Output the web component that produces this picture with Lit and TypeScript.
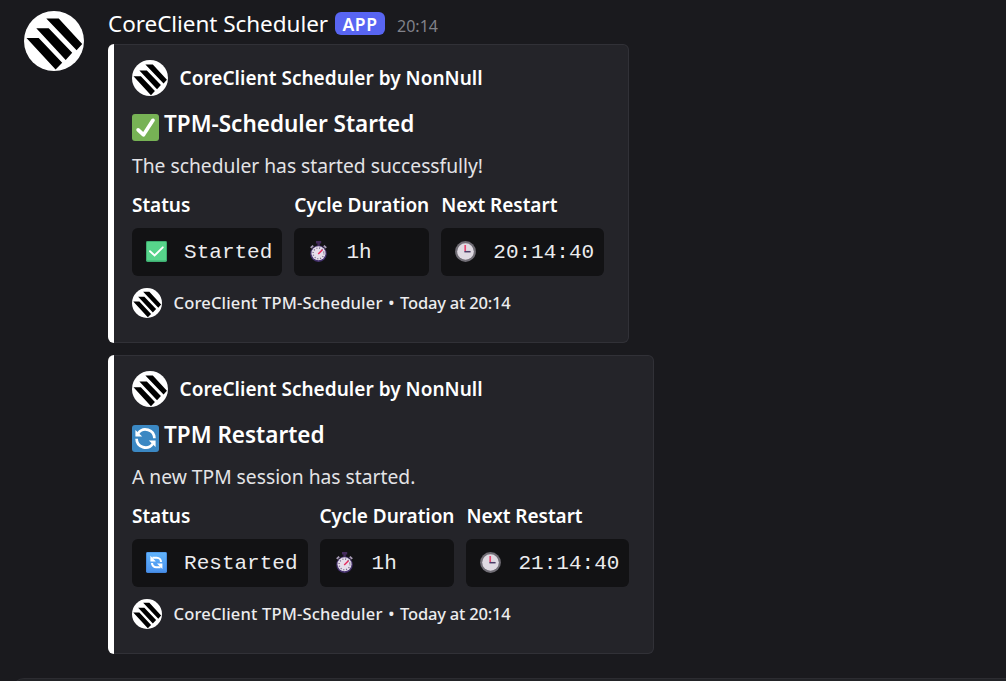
import { LitElement, html, css, svg } from "lit";
import { customElement, property } from "lit/decorators.js";

type IconName = "check" | "refresh" | "miniCheck" | "miniRefresh" | "stopwatch" | "clock";

interface Field {
  label: string;
  icon: IconName;
  value: string;
}

interface Embed {
  icon: IconName;
  title: string;
  description: string;
  fields: Field[];
}

const EMBEDS: Embed[] = [
  {
    icon: "check",
    title: "TPM-Scheduler Started",
    description: "The scheduler has started successfully!",
    fields: [
      { label: "Status", icon: "miniCheck", value: "Started" },
      { label: "Cycle Duration", icon: "stopwatch", value: "1h" },
      { label: "Next Restart", icon: "clock", value: "20:14:40" },
    ],
  },
  {
    icon: "refresh",
    title: "TPM Restarted",
    description: "A new TPM session has started.",
    fields: [
      { label: "Status", icon: "miniRefresh", value: "Restarted" },
      { label: "Cycle Duration", icon: "stopwatch", value: "1h" },
      { label: "Next Restart", icon: "clock", value: "21:14:40" },
    ],
  },
];

const ICONS = {
  check: svg`<svg viewBox="0 0 36 36">
    <rect width="36" height="36" rx="4" fill="#77b255"/>
    <path fill="#fff" d="M29.28 6.362c-1.156-.751-2.704-.422-3.458.736L14.936 23.877l-5.029-4.65c-1.014-.938-2.596-.875-3.533.138-.937 1.014-.875 2.596.139 3.533l7.209 6.666c.48.445 1.09.665 1.696.665.673 0 1.534-.282 2.099-1.139.332-.506 12.5-19.27 12.5-19.27.751-1.159.421-2.707-.737-3.458z"/>
  </svg>`,
  refresh: svg`<svg viewBox="0 0 27 27">
    <rect width="27" height="27" rx="3" fill="#3b88c3"/>
    <g fill="none" stroke="#fff" stroke-width="2.7">
      <path d="M6.2 8.3A8.9 8.9 0 0 1 22.4 13.3"/>
      <path d="M20.8 18.7A8.9 8.9 0 0 1 4.6 13.7"/>
    </g>
    <path fill="#fff" d="M3.4 5v6.5h6.8zM23.6 22v-6.5h-6.8z"/>
  </svg>`,
  miniCheck: svg`<svg viewBox="0 0 21 21">
    <rect width="21" height="21" rx="1.4" fill="#3faf72"/>
    <rect x="1" y="1" width="19" height="18.6" rx=".8" fill="#57d48b"/>
    <path d="M4 10.2l4.6 4.3 8.2-8.2" fill="none" stroke="#fff" stroke-width="1.9" stroke-linecap="round"/>
  </svg>`,
  miniRefresh: svg`<svg viewBox="0 0 21 21">
    <defs><linearGradient id="b" x1="0" y1="0" x2="0" y2="1">
      <stop offset="0" stop-color="#62b4fb"/><stop offset="1" stop-color="#4b93ee"/>
    </linearGradient></defs>
    <rect width="21" height="21" rx="1.4" fill="#4386dc"/>
    <rect x=".8" y=".6" width="19.4" height="19.2" rx=".9" fill="url(#b)"/>
    <g fill="none" stroke="#fff" stroke-width="2.1">
      <path d="M6.4 5.8h4.4a4.2 4.2 0 0 1 4.2 4.2"/>
      <path d="M14.6 15.2h-4.4A4.2 4.2 0 0 1 6 11"/>
    </g>
    <path fill="#fff" d="M4.4 3.8v5.6h5.4zM16.4 17v-5.6h-5.4z"/>
  </svg>`,
  stopwatch: svg`<svg viewBox="0 0 21 21">
    <path d="M8 0h5.2v2.6h-1.4V5H9.4V2.6H8z" fill="#432a5b"/>
    <path d="M2.8 6.9l2.4-2.3M18.2 6.9l-2.4-2.3" stroke="#a79bb5" stroke-width="2"/>
    <circle cx="10.5" cy="12.7" r="8.2" fill="#46336f"/>
    <circle cx="10.5" cy="12.3" r="7" fill="#e6deeb"/>
    <circle cx="10.5" cy="12.4" r="5.4" fill="none" stroke="#796b8b" stroke-width="1.4" stroke-dasharray="1 1.83"/>
    <path d="M10.2 13l4.3-4.3" stroke="#e52c5e" stroke-width="1.5"/>
  </svg>`,
  clock: svg`<svg viewBox="0 0 21 21">
    <circle cx="10.5" cy="10.5" r="10.4" fill="#716e76"/>
    <circle cx="10.5" cy="10.5" r="8.3" fill="#dfdae2"/>
    <path d="M10.2 4v6.5" stroke="#e84b73" stroke-width="1.7"/>
    <path d="M9.4 10.7h6.2" stroke="#4b3c67" stroke-width="1.5"/>
  </svg>`,
};

const LOGO = svg`<svg viewBox="0 0 60 60">
  <circle cx="30" cy="30" r="30" fill="#fff"/>
  <path fill="#000" d="M2.5 27h12.2L38.2 51.8l-6.6 6.8zM12.3 17.3h12.4L48.2 41.8l-6.5 7.1zM22.3 7.5h12.4L58.2 32.9l-5.6 6.4z"/>
</svg>`;

@customElement("scheduler-embed")
class SchedulerEmbed extends LitElement {
  @property({ attribute: false }) data!: Embed;

  static styles = css`
    :host {
      display: flex;
      height: 299px;
      width: max-content;
      color: #fff;
    }
    svg { display: block; width: 100%; height: 100%; }
    .accent { width: 6px; border-radius: 6px 0 0 6px; background: #fff; }
    .body {
      box-sizing: border-box;
      height: 299px;
      padding: 15px 24px 0 18px;
      background: #242429;
      border: 1px solid #313137;
      border-left: 0;
      border-radius: 0 6px 6px 0;
    }
    .author { display: flex; align-items: center; gap: 11.5px; height: 36px; font-size: 19px; font-weight: 600; letter-spacing: 0.03px; }
    .author-logo { width: 36px; height: 36px; }
    .title { display: flex; gap: 5px; height: 30px; margin-top: 12px; font-size: 22.5px; line-height: 32px; font-weight: 600; }
    .title-icon { width: 27px; height: 27px; margin-top: 6px; }
    .description { margin-top: 15px; font-size: 19.25px; line-height: 26px; color: #e3e3e6; }
    .fields { display: grid; grid-template-columns: repeat(3, max-content); gap: 12px; margin-top: 13px; }
    .label { font-size: 19px; line-height: 26px; font-weight: 600; letter-spacing: -0.04px; }
    .value {
      box-sizing: border-box;
      display: flex;
      align-items: center;
      height: 48px;
      margin-top: 10px;
      padding: 0 10px 0 14px;
      border-radius: 6px;
      background: #121214;
      color: #ececee;
      font: 21px/24px "Liberation Mono", monospace;
    }
    .value-icon { width: 21px; height: 21px; margin: 0 17.1px 1px 0; }
    .value-text { padding-top: 2px; }
    .footer { display: flex; align-items: center; height: 30px; margin-top: 12px; font-size: 16.5px; font-weight: 500; color: #ececee; }
    .footer span { line-height: 24px; margin-top: -1px; }
    .footer-logo { width: 30px; height: 30px; margin-right: 11.5px; }
    .footer-name { letter-spacing: 0.18px; }
    .dot { width: 17.5px; text-align: center; }
    .footer-time { letter-spacing: -0.2px; }
  `;

  render() {
    const { icon, title, description, fields } = this.data;
    return html`
      <div class="accent"></div>
      <div class="body">
        <div class="author"><div class="author-logo">${LOGO}</div>CoreClient Scheduler by NonNull</div>
        <div class="title"><div class="title-icon">${ICONS[icon]}</div>${title}</div>
        <div class="description">${description}</div>
        <div class="fields">
          ${fields.map(
            (f) => html`<div class="field">
              <div class="label">${f.label}</div>
              <div class="value">
                <div class="value-icon">${ICONS[f.icon]}</div>
                <span class="value-text">${f.value}</span>
              </div>
            </div>`
          )}
        </div>
        <div class="footer">
          <div class="footer-logo">${LOGO}</div>
          <span class="footer-name">CoreClient TPM-Scheduler</span>
          <span class="dot">•</span>
          <span class="footer-time">Today at 20:14</span>
        </div>
      </div>
    `;
  }
}

@customElement("app-root")
class AppRoot extends LitElement {
  static styles = css`
    :host {
      display: flex;
      flex-direction: column;
      box-sizing: border-box;
      height: 681px;
      overflow: hidden;
      background: #1a1a1e;
      color: #fff;
      font-family: "Noto Sans", sans-serif;
      white-space: nowrap;
    }
    svg { display: block; width: 100%; height: 100%; }
    .message { display: flex; flex: none; height: 678px; padding-left: 24px; }
    .avatar { width: 60px; height: 60px; margin: 11px 24px 0 0; }
    .header { display: flex; align-items: center; box-sizing: border-box; height: 44px; padding-top: 3px; }
    .name { font-size: 22.5px; line-height: 30px; letter-spacing: -0.05px; }
    .badge {
      width: 50px;
      height: 23px;
      margin: 0 12px 0 7px;
      border-radius: 6px;
      background: #5865f2;
      font-size: 17.5px;
      line-height: 24px;
      font-weight: 600;
      text-align: center;
      letter-spacing: 0.6px;
    }
    .time { font-size: 16px; line-height: 20px; padding-top: 4px; color: #81828a; }
    .embeds { display: flex; flex-direction: column; gap: 12px; }
    .composer {
      flex: none;
      height: 60px;
      margin-left: 12px;
      border: 1px solid #2c2c31;
      border-right: 0;
      border-radius: 12px 0 0 12px;
      background: #222327;
    }
  `;

  render() {
    return html`
      <div class="message">
        <div class="avatar">${LOGO}</div>
        <div class="content">
          <div class="header">
            <span class="name">CoreClient Scheduler</span>
            <span class="badge">APP</span>
            <span class="time">20:14</span>
          </div>
          <div class="embeds">
            ${EMBEDS.map((e) => html`<scheduler-embed .data=${e}></scheduler-embed>`)}
          </div>
        </div>
      </div>
      <div class="composer"></div>
    `;
  }
}
